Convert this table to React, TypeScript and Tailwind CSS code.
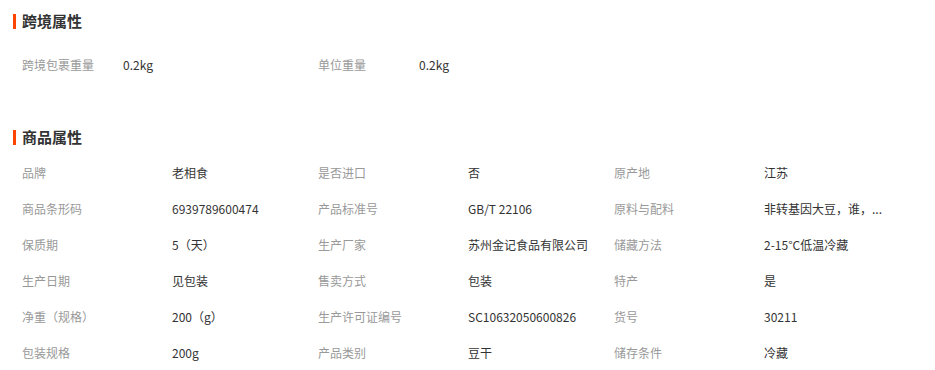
const font = { fontFamily: '"Noto Sans CJK SC", "Noto Sans", sans-serif' };

const crossBorder = [
  ["跨境包裹重量", "0.2kg"],
  ["单位重量", "0.2kg"],
];

const product = [
  ["品牌", "老相食"],
  ["是否进口", "否"],
  ["原产地", "江苏"],
  ["商品条形码", "6939789600474"],
  ["产品标准号", "GB/T 22106"],
  ["原料与配料", "非转基因大豆，谁，..."],
  ["保质期", "5（天）"],
  ["生产厂家", "苏州金记食品有限公司"],
  ["储藏方法", "2-15°C低温冷藏"],
  ["生产日期", "见包装"],
  ["售卖方式", "包装"],
  ["特产", "是"],
  ["净重（规格）", "200（g）"],
  ["生产许可证编号", "SC10632050600826"],
  ["货号", "30211"],
  ["包装规格", "200g"],
  ["产品类别", "豆干"],
  ["储存条件", "冷藏"],
];

function Title({ text }: { text: string }) {
  return (
    <div className="flex items-center h-[36px] pl-[13px]">
      <span className="w-[3px] h-[15px] bg-[#ff4400] mr-[6px]" />
      <span className="text-[15px] font-bold text-[#333]">{text}</span>
    </div>
  );
}

export default function App() {
  return (
    <div className="w-[935px] h-[370px] bg-white overflow-hidden pt-[3px]" style={font}>
      <Title text="跨境属性" />
      <div className="grid grid-cols-[296px_296px_296px] pl-[22px] mt-[8px]">
        {crossBorder.map(([k, v]) => (
          <div key={k} className="flex items-center h-[36px] text-[12px]">
            <span className="w-[101px] text-[#999]">{k}</span>
            <span className="text-[#333]">{v}</span>
          </div>
        ))}
      </div>

      <div className="mt-[36px]">
        <Title text="商品属性" />
      </div>
      <div className="grid grid-cols-[296px_296px_296px] pl-[22px]">
        {product.map(([k, v]) => (
          <div key={k} className="flex items-center h-[36px] text-[12px]">
            <span className="w-[150px] text-[#999]">{k}</span>
            <span className="text-[#333]">{v}</span>
          </div>
        ))}
      </div>
    </div>
  );
}
